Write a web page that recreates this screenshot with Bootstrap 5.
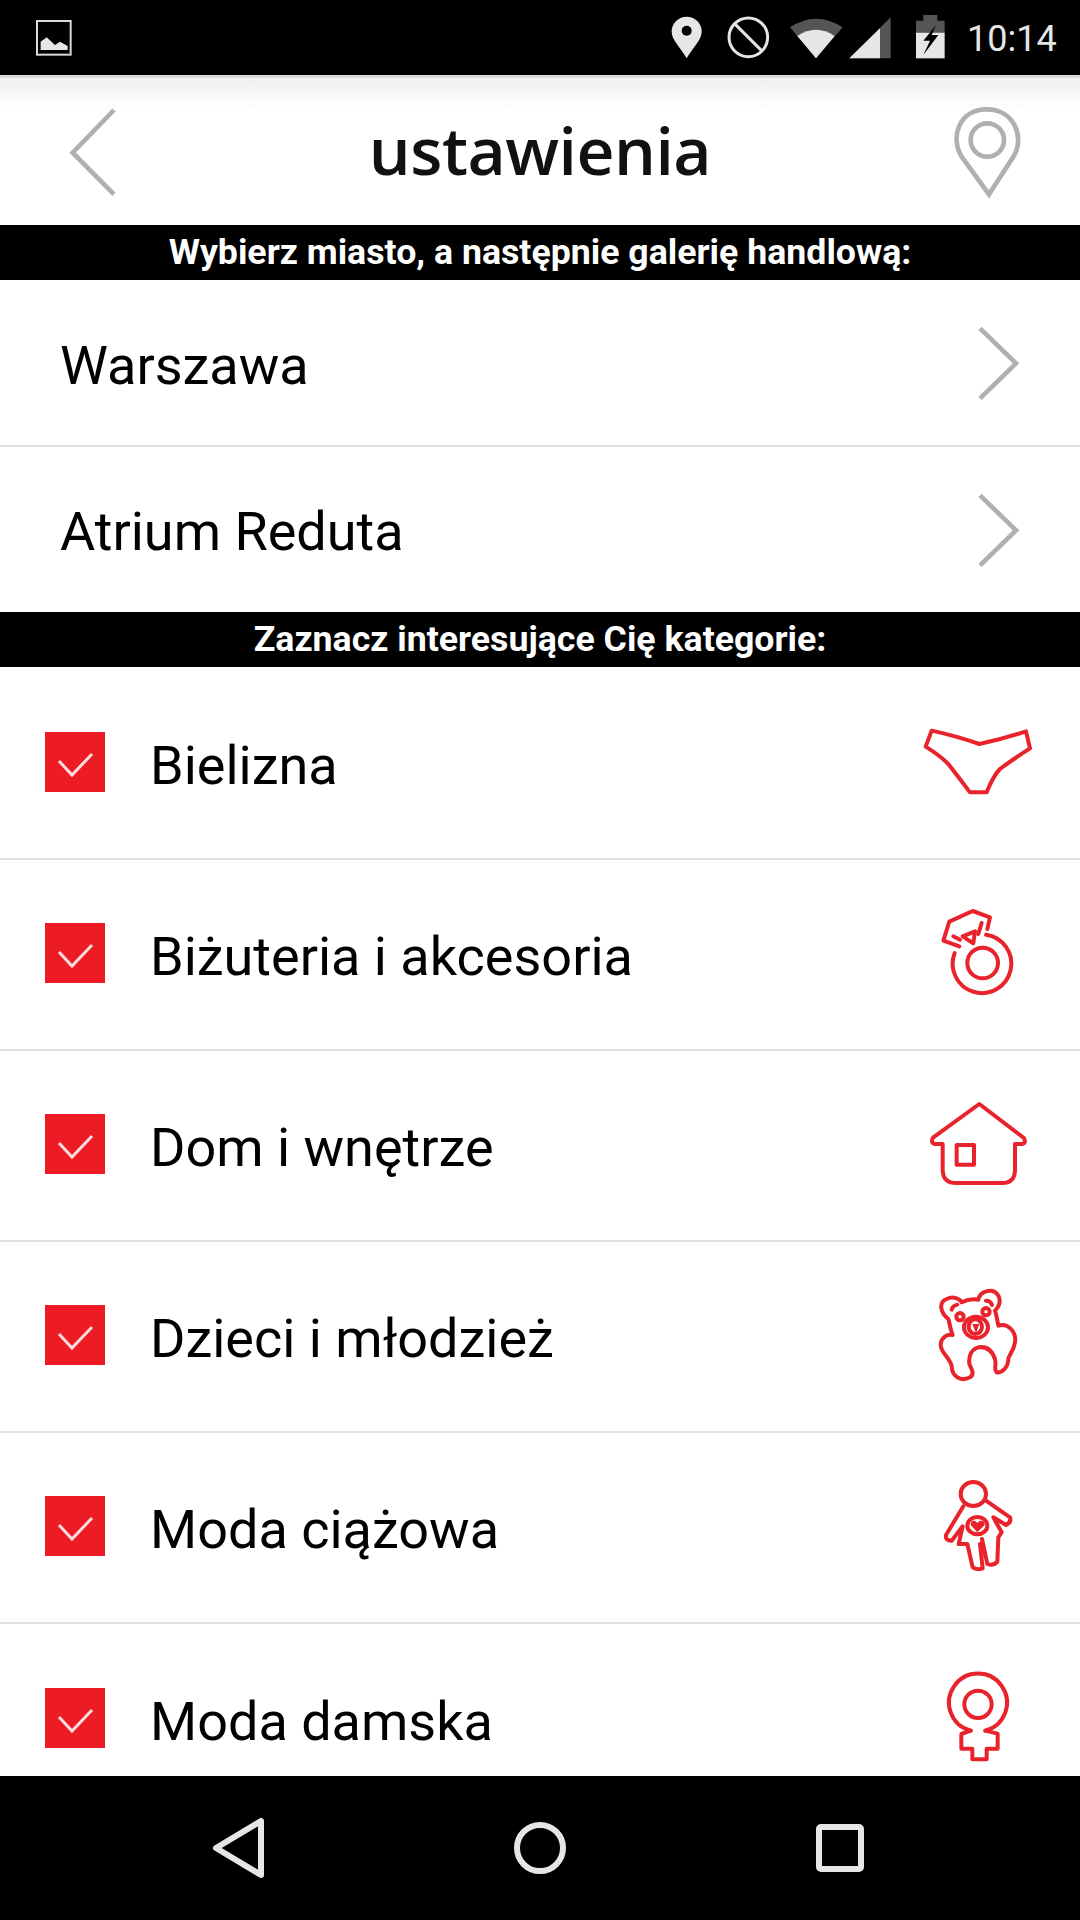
<!DOCTYPE html>
<html lang="pl">
<head>
    <meta charset="UTF-8">
    <title>Ustawienia</title>
    <link href="https://cdn.jsdelivr.net/npm/bootstrap@5.3.2/dist/css/bootstrap.min.css" rel="stylesheet">
    <style>
        body {
            margin: 0;
            background: #000;
            font-family: Roboto, "Liberation Sans", sans-serif;
            overflow: hidden;
        }
        .screen {
            width: 1080px;
            height: 1920px;
            background: #fff;
        }
        .status-bar {
            height: 75px;
            background: #000;
        }
        .status-time {
            width: 113px;
            margin-left: 7px;
            color: #e6e6e6;
            font-size: 36px;
            line-height: 78px;
        }
        .app-header {
            height: 150px;
            background: linear-gradient(#d9d9d9 0, #d9d9d9 3px, #f0f0f0 3px, #fff 36px);
        }
        .app-title {
            font-family: "Open Sans", sans-serif;
            font-weight: 600;
            font-size: 66px;
            line-height: 1;
            color: #111;
            letter-spacing: -.5px;
            margin-top: -2px;
        }
        .section-bar {
            height: 55px;
            background: #000;
            color: #fff;
            font-weight: 700;
            font-size: 35.7px;
            line-height: 55px;
        }
        .place-row {
            padding: 0 0 0 60px;
            font-size: 54px;
            color: #000;
        }
        .place-first {
            height: 167px;
        }
        .place-second {
            height: 165px;
        }
        .place-first .place-label {
            margin-top: 6px;
        }
        .place-second .place-label {
            margin-top: 3px;
        }
        .cat-list {
            height: 1109px;
            padding-top: 2px;
            overflow: hidden;
        }
        .cat-row {
            height: 191px;
            flex: none;
            padding: 0 0 0 45px;
            font-size: 54px;
            color: #000;
        }
        .list-group-item.hair {
            border-bottom: 2px solid #e0e0e0;
        }
        .cat-check.form-check-input {
            width: 60px;
            height: 60px;
            flex: none;
            margin: 0 45px 3px 0;
            border: 0;
            border-radius: 0;
            background-color: #ed1c24;
            background-size: 60px 60px;
            background-image: url("data:image/svg+xml,%3csvg xmlns='http://www.w3.org/2000/svg' viewBox='0 0 60 60'%3e%3cpath fill='none' stroke='%23fbdcdc' stroke-width='3' d='M14 29l13 14 20-21'/%3e%3c/svg%3e");
        }
        .cat-label {
            flex: 1;
            margin-top: 4px;
        }
        .icon-cell {
            width: 200px;
            flex: none;
        }
        .red-line {
            fill: none;
            stroke: #e8232b;
            stroke-width: 12;
            stroke-linejoin: round;
            stroke-linecap: round;
        }
        .grey-line {
            fill: none;
            stroke: #b0b0b0;
            stroke-width: 14;
        }
        .nav-bar {
            height: 144px;
            background: #000;
        }
        .nav-cell {
            width: 300px;
        }
        .nav-line {
            fill: none;
            stroke: #e6e6e6;
            stroke-width: 6;
            stroke-linejoin: round;
        }
    </style>
</head>
<body>
<div class="screen d-flex flex-column">

    <div class="status-bar d-flex justify-content-between">
        <svg width="200" height="75" viewBox="0 0 600 225">
            <rect x="111" y="63" width="101" height="101" fill="none" stroke="#d8d8d8" stroke-width="6"/>
            <path d="M122 150V125L140 112L165 135L180 125L203 138V150Z" fill="#e6e6e6"/>
        </svg>
        <div class="d-flex">
            <svg width="320" height="75" viewBox="0 0 960 225">
                <path d="M140 175C120 140 95 120 95 95A45 45 0 0 1 185 95C185 120 160 140 140 175Z" fill="#e6e6e6"/>
                <circle cx="140" cy="92" r="15" fill="#000"/>
                <circle cx="325" cy="112" r="58" fill="none" stroke="#e6e6e6" stroke-width="9"/>
                <path d="M283 70L367 154" stroke="#e6e6e6" stroke-width="9"/>
                <path d="M450 82Q528 30 608 82L528 175Z" fill="#555"/>
                <path d="M472 108Q528 70 584 108L528 175Z" fill="#e6e6e6"/>
                <path d="M628 175L752 52V175Z" fill="#555"/>
                <path d="M628 175L720 85V175Z" fill="#e6e6e6"/>
                <path d="M850 62V45H892V62H914V98H828V62Z" fill="#555"/>
                <path d="M828 98H914V175H828Z" fill="#e6e6e6"/>
                <path d="M888 75L850 122H870L850 165L895 105H875L888 75Z" fill="#000"/>
            </svg>
            <div class="status-time">10:14</div>
        </div>
    </div>

    <header class="app-header d-flex align-items-center">
        <svg class="icon-cell" width="200" height="150" viewBox="0 0 600 450">
            <path class="grey-line" d="M342 105L218 233L342 358"/>
        </svg>
        <div class="app-title flex-grow-1 text-center">ustawienia</div>
        <svg class="icon-cell" width="200" height="150" viewBox="0 0 600 450">
            <path class="grey-line" d="M327 358L245 245C210 190 235 103 320 103C405 103 435 190 400 245Z"/>
            <circle class="grey-line" cx="322" cy="195" r="50"/>
        </svg>
    </header>

    <div class="section-bar text-center">Wybierz miasto, a następnie galerię handlową:</div>

    <div class="list-group list-group-flush">
        <div class="list-group-item hair place-row place-first d-flex align-items-center justify-content-between">
            <span class="place-label">Warszawa</span>
            <svg class="icon-cell" width="200" height="164" viewBox="0 3 600 492">
                <path class="grey-line" d="M300 145L408 250L300 355"/>
            </svg>
        </div>
        <div class="list-group-item place-row place-second d-flex align-items-center justify-content-between">
            <span class="place-label">Atrium Reduta</span>
            <svg class="icon-cell" width="200" height="164" viewBox="0 3 600 492">
                <path class="grey-line" d="M300 145L408 250L300 355"/>
            </svg>
        </div>
    </div>

    <div class="section-bar text-center">Zaznacz interesujące Cię kategorie:</div>

    <div class="cat-list list-group list-group-flush">
        <label class="list-group-item hair cat-row d-flex align-items-center">
            <input class="form-check-input cat-check" type="checkbox" checked>
            <span class="cat-label">Bielizna</span>
            <svg class="icon-cell" width="200" height="191" viewBox="0 -93 600 573">
                <path class="red-line" d="M155 95Q225 110 298 135Q370 120 438 97L450 148Q400 180 360 210Q340 230 320 280L270 280Q240 240 205 195Q180 170 137 143Z"/>
            </svg>
        </label>
        <label class="list-group-item hair cat-row d-flex align-items-center">
            <input class="form-check-input cat-check" type="checkbox" checked>
            <span class="cat-label">Biżuteria i akcesoria</span>
            <svg class="icon-cell" width="200" height="191" viewBox="0 480 600 573">
                <path class="red-line" d="M224 762A88 88 0 1 0 318 707"/>
                <circle class="red-line" cx="308" cy="792" r="46"/>
                <path class="red-line" d="M238 742L190 725L208 668L278 636L330 655L322 690"/>
                <path class="red-line" d="M248 712L285 697L280 733Z"/>
                <path class="red-line" d="M220 712L240 722M295 705L305 672"/>
            </svg>
        </label>
        <label class="list-group-item hair cat-row d-flex align-items-center">
            <input class="form-check-input cat-check" type="checkbox" checked>
            <span class="cat-label">Dom i wnętrze</span>
            <svg class="icon-cell" width="200" height="191" viewBox="0 6 600 573">
                <path class="red-line" d="M298 168L432 270Q440 287 425 288L405 288V365Q405 405 365 405H230Q188 405 188 365V288H165Q150 285 160 268Z"/>
                <rect class="red-line" x="230" y="291" width="52" height="59"/>
            </svg>
        </label>
        <label class="list-group-item hair cat-row d-flex align-items-center">
            <input class="form-check-input cat-check" type="checkbox" checked>
            <span class="cat-label">Dzieci i młodzież</span>
            <svg class="icon-cell" width="200" height="191" viewBox="0 -84 600 573">
                <path class="red-line" d="M205 150C180 130 175 100 200 90C220 80 240 90 245 100C265 90 285 90 295 92C300 65 340 55 355 80C365 100 355 115 345 125C350 140 352 155 355 170C385 160 410 190 405 220C400 250 385 260 385 270C385 295 365 312 350 310C340 300 350 290 345 270C335 240 315 232 295 235C275 240 265 260 268 285C275 300 285 315 270 325C240 340 215 320 215 290C205 260 180 250 182 225C185 205 200 195 218 198C210 180 210 165 205 150Z"/>
                <circle class="red-line" cx="240" cy="143" r="11"/>
                <circle class="red-line" cx="318" cy="128" r="11"/>
                <ellipse class="red-line" cx="288" cy="175" rx="36" ry="32"/>
                <ellipse class="red-line" cx="286" cy="173" rx="20" ry="22"/>
                <path d="M277 165H298L288 192Z" fill="#e8232b"/>
                <path class="red-line" d="M215 122Q218 110 232 107M318 95Q332 95 336 108"/>
            </svg>
        </label>
        <label class="list-group-item hair cat-row d-flex align-items-center">
            <input class="form-check-input cat-check" type="checkbox" checked>
            <span class="cat-label">Moda ciążowa</span>
            <svg class="icon-cell" width="200" height="191" viewBox="0 489 600 573">
                <ellipse class="red-line" cx="280" cy="675" rx="38" ry="36"/>
                <path class="red-line" d="M250 712L198 798Q195 815 215 815L248 772L236 825L262 825L278 895Q290 905 308 898L300 825M306 810L322 885Q340 892 352 878L355 805L365 790L340 745L378 768Q395 760 390 745L318 695"/>
                <ellipse class="red-line" cx="292" cy="770" rx="30" ry="26"/>
                <path d="M292 790L272 768Q272 752 286 756L292 762L298 756Q314 752 314 768Z" fill="#e8232b"/>
            </svg>
        </label>
        <label class="list-group-item cat-row d-flex align-items-center">
            <input class="form-check-input cat-check" type="checkbox" checked>
            <span class="cat-label">Moda damska</span>
            <svg class="icon-cell" width="200" height="191" viewBox="0 6 600 573">
                <path class="red-line" d="M272 326A87 87 0 1 1 316 326"/>
                <circle class="red-line" cx="294" cy="247" r="41"/>
                <path class="red-line" d="M272 326L244 336V380H277V412H320V380H353V335L316 326"/>
            </svg>
        </label>
    </div>

    <nav class="nav-bar d-flex justify-content-center align-items-center">
        <div class="nav-cell text-center">
            <svg width="60" height="62" viewBox="0 0 60 62">
                <path class="nav-line" d="M6 31L51 4V58Z"/>
            </svg>
        </div>
        <div class="nav-cell text-center">
            <svg width="60" height="62" viewBox="0 0 60 62">
                <circle class="nav-line" cx="30" cy="31" r="23"/>
            </svg>
        </div>
        <div class="nav-cell text-center">
            <svg width="60" height="62" viewBox="0 0 60 62">
                <rect class="nav-line" x="9" y="10" width="42" height="42" rx="2"/>
            </svg>
        </div>
    </nav>
</div>
<script src="https://cdn.jsdelivr.net/npm/bootstrap@5.3.2/dist/js/bootstrap.bundle.min.js"></script>
</body>
</html>
